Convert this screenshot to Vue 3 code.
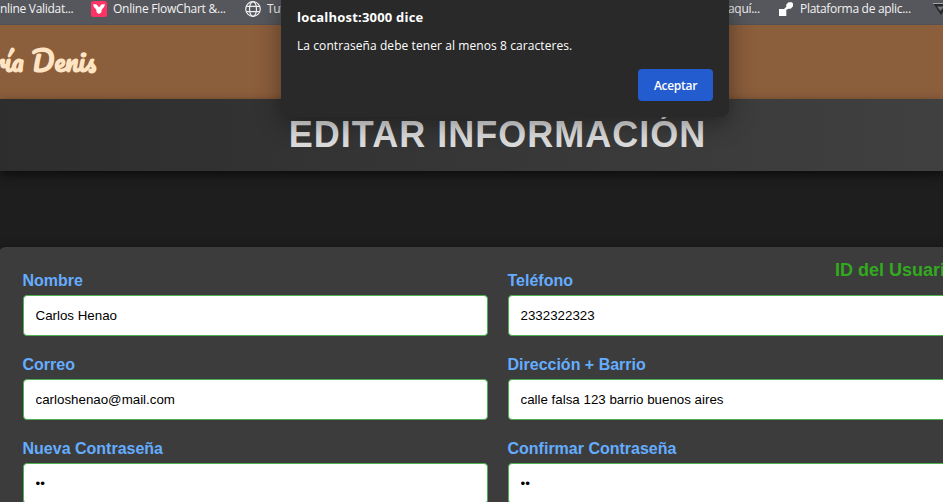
<script setup>
const fields = [
  { id: 'nombre', label: 'Nombre', type: 'text', value: 'Carlos Henao' },
  { id: 'telefono', label: 'Teléfono', type: 'text', value: '2332322323' },
  { id: 'correo', label: 'Correo', type: 'text', value: 'carloshenao@mail.com' },
  { id: 'direccion', label: 'Dirección + Barrio', type: 'text', value: 'calle falsa 123 barrio buenos aires' },
  { id: 'nueva', label: 'Nueva Contraseña', type: 'password', value: '12' },
  { id: 'confirmar', label: 'Confirmar Contraseña', type: 'password', value: '12' },
]
</script>

<template>
  <div class="window">
    <nav class="bookmarks">
      <div class="group">
        <span class="mark first">nline Validat...</span>
        <svg class="flow" width="16" height="16" viewBox="0 0 16 16">
          <rect width="16" height="16" rx="2.5" fill="#ff3366" />
          <path d="M2 3.300H5.300L8 6.300L10.700 3.300H14Q13.500 7 10.800 8.500L10.300 11.500L8 13L5.700 11.500L5.200 8.500Q2.500 7 2 3.300Z" fill="#fff" />
        </svg>
        <span class="mark flowtext">Online FlowChart &amp;...</span>
        <svg class="globe" width="16" height="16" viewBox="0 0 16 16" fill="none" stroke="#eeeeef" stroke-width="1.2">
          <circle cx="8" cy="8" r="7.300" />
          <ellipse cx="8" cy="8" rx="3.500" ry="7.300" />
          <path d="M1.300 5.300H14.700M1.300 10.700H14.700" />
        </svg>
        <span class="mark tut">Tut</span>
      </div>
      <div class="group right">
        <span class="mark aqui">aquí...</span>
        <svg class="platform" width="16" height="16" viewBox="0 0 16 16">
          <path d="M1 8H6L8.300 5.700V3.600L10.500 1.300H13.800L15 2.500V5.300L12.800 7.700H10.500L8.300 9V15H1Z" fill="#fff" />
        </svg>
        <span class="mark plat">Plataforma de aplic...</span>
        <svg class="delta" width="16" height="16" viewBox="0 0 16 16">
          <path d="M0 2H16L8 14Z" fill="#29292b" />
          <path d="M0 2.500H16" stroke="#a5a5a7" />
          <path d="M4 5.500H11L7.500 10Z" fill="#77777b" />
        </svg>
      </div>
    </nav>

    <header class="site-header"><span class="brand">ría Denis</span></header>

    <section class="title-band"><h1>EDITAR INFORMACIÓN</h1></section>

    <main>
      <form class="panel">
        <strong class="user-id">ID del Usuario</strong>
        <div v-for="f in fields" :key="f.id" class="field">
          <label :for="f.id">{{ f.label }}</label>
          <input :id="f.id" :type="f.type" :value="f.value" />
        </div>
      </form>
    </main>

    <div class="dialog" role="alertdialog">
      <h2>localhost:3000 dice</h2>
      <p>La contraseña debe tener al menos 8 caracteres.</p>
      <button type="button">Aceptar</button>
    </div>
  </div>
</template>

<style>
body {
  margin: 0;
  overflow: hidden;
  background: #1e1e1e;
}
</style>

<style scoped>
.window {
  position: relative;
  width: 943px;
  height: 502px;
  overflow: hidden;
  background: #1e1e1e;
  font-family: "Liberation Sans", Arial, sans-serif;
}
.bookmarks {
  height: 25px;
  display: flex;
  justify-content: space-between;
  background: #56575c;
  box-sizing: border-box;
  border-bottom: 1px solid #525156;
}
.group {
  display: flex;
  align-items: center;
  height: 18px;
  color: #f2f2f3;
  font: 12px/18px "Open Sans", "Noto Sans", sans-serif;
  letter-spacing: -0.3px;
  white-space: nowrap;
}
.group svg {
  flex: none;
}
.mark {
  flex: none;
}
.first {
  width: 91px;
}
.flowtext {
  width: 126px;
  margin-left: 6px;
  letter-spacing: -0.24px;
}
.globe {
  margin: 0 6px;
}
.tut {
  width: 14px;
  overflow: hidden;
}
.right {
  width: 215px;
}
.aqui {
  width: 50px;
}
.plat {
  width: 133px;
  margin-left: 6px;
}
.site-header {
  height: 74px;
  display: flex;
  align-items: center;
  background: #8b5e3c;
}
.brand {
  color: #ffe4c4;
  font: 700 27.5px/40px Pacifico, cursive;
  margin: 0 0 4px -8px;
}
.title-band {
  position: relative;
  height: 72px;
  background: linear-gradient(90deg, #2d2d2d, #404040);
  box-shadow: 0 4px 10px rgba(0, 0, 0, 0.6);
  display: flex;
  justify-content: center;
}
h1 {
  margin: 0;
  padding-left: 52px;
  font-size: 36px;
  line-height: 71px;
  letter-spacing: 1px;
  color: #dcdcdc;
  white-space: nowrap;
}
main {
  padding-top: 76px;
}
.panel {
  position: relative;
  width: 1000px;
  height: 300px;
  margin-left: -2px;
  padding: 23px 25px;
  box-sizing: border-box;
  border-radius: 8px;
  background: #3c3c3c;
  box-shadow: 0 0 10px rgba(0, 0, 0, 0.3);
  display: grid;
  grid-template-columns: 465px 465px;
  grid-auto-rows: 66px;
  gap: 18px 20px;
}
.user-id {
  position: absolute;
  left: 837px;
  top: 12px;
  font-size: 18px;
  line-height: 22px;
  color: #32a91e;
  white-space: nowrap;
}
.field {
  display: flex;
  flex-direction: column;
}
label {
  height: 25px;
  margin-left: -0.5px;
  font-weight: 700;
  font-size: 16px;
  line-height: 22px;
  color: #64adff;
}
input {
  height: 41px;
  box-sizing: border-box;
  padding: 0 11.5px;
  border: 1px solid #4caf50;
  border-radius: 4px;
  background: #fff;
  color: #000;
  font: 13.333px "Liberation Sans", Arial, sans-serif;
  outline: none;
}
.dialog {
  position: absolute;
  left: 281px;
  top: -10px;
  width: 448px;
  height: 127px;
  box-sizing: border-box;
  padding: 17px 16px 16px;
  border-radius: 8px;
  background: #292929;
  box-shadow: 0 6px 24px rgba(0, 0, 0, 0.4);
  color: #fff;
  font-family: "Open Sans", "Noto Sans", sans-serif;
  display: flex;
  flex-direction: column;
}
h2 {
  margin: 0;
  font-size: 13px;
  line-height: 20px;
  font-weight: 700;
  letter-spacing: 0.2px;
}
p {
  margin: 9px 0 0;
  font-size: 12px;
  line-height: 20px;
  letter-spacing: 0.08px;
}
button {
  margin-top: auto;
  align-self: flex-end;
  width: 75px;
  height: 32px;
  padding: 0;
  border: 0;
  border-radius: 4px;
  background: #235ccf;
  color: #fff;
  font: 600 12px "Open Sans", "Noto Sans", sans-serif;
  letter-spacing: -0.3px;
}
</style>
